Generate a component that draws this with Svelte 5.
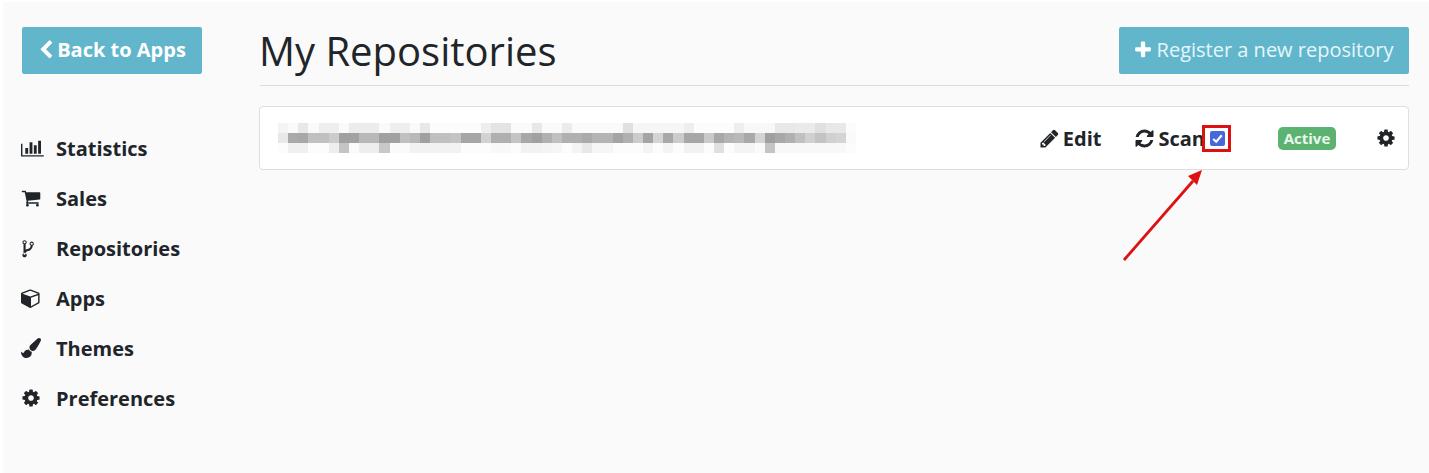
<script>
  // Font Awesome 4 glyphs, [path, viewBox width]
  const icons = {
    back: 'M1427 301l-531 531 531 531q19 19 19 45t-19 45l-166 166q-19 19-45 19t-45-19l-742-742q-19-19-19-45t19-45l742-742q19-19 45-19t45 19l166 166q19 19 19 45t-19 45z',
    plus: 'M1600 736v192q0 40-28 68t-68 28h-416v416q0 40-28 68t-68 28h-192q-40 0-68-28t-28-68v-416h-416q-40 0-68-28t-28-68v-192q0-40 28-68t68-28h416v-416q0-40 28-68t68-28h192q40 0 68 28t28 68v416h416q40 0 68 28t28 68z',
    chart: 'M640 896v512h-256v-512h256zm384-512v1024h-256v-1024h256zm1024 1152v128h-2048v-1152h128v1024h1920zm-640-896v768h-256v-768h256zm384-384v1152h-256v-1152h256z',
    cart: 'M704 1536q0 52-38 90t-90 38-90-38-38-90 38-90 90-38 90 38 38 90zm896 0q0 52-38 90t-90 38-90-38-38-90 38-90 90-38 90 38 38 90zm128-1088v512q0 24-16.5 42.5t-40.5 21.5l-1044 122q13 60 13 70 0 16-24 64h920q26 0 45 19t19 45-19 45-45 19h-1024q-26 0-45-19t-19-45q0-11 8-31.5t16-36 21.5-40 15.5-29.5l-177-823h-204q-26 0-45-19t-19-45 19-45 45-19h256q16 0 28.5 6.5t19.5 15.5 13 24.5 8 26 5.5 29.5 4.5 26h1201q26 0 45 19t19 45z',
    fork: 'M416 1408q0-40-28-68t-68-28-68 28-28 68 28 68 68 28 68-28 28-68zm0-1024q0-40-28-68t-68-28-68 28-28 68 28 68 68 28 68-28 28-68zm640 128q0-40-28-68t-68-28-68 28-28 68 28 68 68 28 68-28 28-68zm96 0q0 52-26 96.5t-70 69.5q-2 287-226 414-67 38-203 81-128 40-169.5 71t-41.5 100v26q44 25 70 69.5t26 96.5q0 80-56 136t-136 56-136-56-56-136q0-52 26-96.5t70-69.5v-820q-44-25-70-69.5t-26-96.5q0-80 56-136t136-56 136 56 56 136q0 52-26 96.5t-70 69.5v497q54-26 154-57 55-17 87.5-29.5t70.5-31 59-39.5 40.5-51 28-69.5 8.5-91.5q-44-25-70-69.5t-26-96.5q0-80 56-136t136-56 136 56 56 136z',
    cube: 'M896 1629l640-349v-636l-640 233v752zm-64-865l698-254-698-254-698 254zm832-252v768q0 35-18 65t-49 47l-704 384q-28 16-61 16t-61-16l-704-384q-31-17-49-47t-18-65v-768q0-40 23-73t61-47l704-256q22-8 44-8t44 8l704 256q38 14 61 47t23 73z',
    brush: 'M1615 0q70 0 122.5 46.5t52.5 116.5q0 63-45 151-332 629-465 752-97 91-218 91-126 0-216.5-92.5t-90.5-219.5q0-128 92-212l638-579q59-54 130-54zm-909 1034q39 76 106.5 130t150.5 76l1 71q4 213-129.5 347t-348.5 134q-123 0-218-46.5t-152.5-127.5-86.5-183-29-220q7 5 41 30t62 44.5 59 36.5 46 17q41 0 55-37 25-66 57.5-112.5t69.5-76 88-47.5 103-25.5 125-10.5z',
    cog: 'M1152 896q0-106-75-181t-181-75-181 75-75 181 75 181 181 75 181-75 75-181zm512-109v222q0 12-8 23t-20 13l-185 28q-19 54-39 91 35 50 107 138 10 12 10 25t-9 23q-27 37-99 108t-94 71q-12 0-26-9l-138-108q-44 23-91 38-16 136-29 186-7 28-36 28h-222q-14 0-24.5-8.5t-11.5-21.5l-28-184q-49-16-90-37l-141 107q-10 9-25 9-14 0-25-11-126-114-165-168-7-10-7-23 0-12 8-23 15-21 51-66.5t54-70.5q-27-50-41-99l-183-27q-13-2-21-12.5t-8-23.5v-222q0-12 8-23t19-13l186-28q14-46 39-92-40-57-107-138-10-12-10-24 0-10 9-23 26-36 98.5-107.5t94.5-71.5q13 0 26 10l138 107q44-23 91-38 16-136 29-186 7-28 36-28h222q14 0 24.5 8.5t11.5 21.5l28 184q49 16 90 37l142-107q9-9 24-9 13 0 25 10 129 119 165 170 7 8 7 22 0 12-8 23-15 21-51 66.5t-54 70.5q26 50 41 98l183 28q13 2 21 12.5t8 23.5z',
    pencil: 'M491 1536l91-91-235-235-91 91v107h128v128h107zm523-928q0-22-22-22-10 0-17 7l-542 542q-7 7-7 17 0 22 22 22 10 0 17-7l542-542q7-7 7-17zm-54-192l416 416-832 832h-416v-416zm683 96q0 53-37 90l-166 166-416-416 166-165q36-38 90-38 53 0 91 38l235 234q37 39 37 91z',
    refresh: 'M1639 1056q0 5-1 7-64 268-268 434.5t-478 166.5q-146 0-282.5-55t-243.5-157l-129 129q-19 19-45 19t-45-19-19-45v-448q0-26 19-45t45-19h448q26 0 45 19t19 45-19 45l-137 137q71 66 161 102t187 36q134 0 250-65t186-179q11-17 53-117 8-23 30-23h192q13 0 22.5 9.5t9.5 22.5zm25-800v448q0 26-19 45t-45 19h-448q-26 0-45-19t-19-45 19-45l138-138q-148-137-349-137-134 0-250 65t-186 179q-11 17-53 117-8 23-30 23h-199q-13 0-22.5-9.5t-9.5-22.5v-7q65-268 270-434.5t480-166.5q146 0 284 55.5t245 156.5l130-129q19-19 45-19t45 19 19 45z'
  }

  const nav = [
    { label: 'Statistics', icon: 'chart', vb: 2048 },
    { label: 'Sales', icon: 'cart', vb: 1792 },
    { label: 'Repositories', icon: 'fork', vb: 1792 },
    { label: 'Apps', icon: 'cube', vb: 1792 },
    { label: 'Themes', icon: 'brush', vb: 1792 },
    { label: 'Preferences', icon: 'cog', vb: 1792 }
  ]

  // greys of the pixelated repository name, one row per mosaic line
  const blurRows = [
    [0xf4,0xfa,0xe8,0xfa,0xee,0xee,0xfa,0xec,0xec,0xec,0xfa,0xee,0xee,0xfa,0xe8,0xfc,0xfc,0xfc,0xfc,0xfc,0xee,0xe4,0xe4,0xfa,0xfa,0xe8,0xfa,0xfa,0xec,0xfa,0xfa,0xfa,0xfa,0xfa,0xe0,0xf6,0xf6,0xf6,0xf6,0xf6,0xee,0xfc,0xfc,0xfc,0xfc,0xee,0xf8,0xf8,0xf8,0xe8,0xe8,0xea,0xea,0xe0,0xe8,0xe8,0xfc],
    [0xe8,0xaa,0xa8,0xc0,0xc0,0xcc,0xa1,0xa2,0xb8,0xb8,0xa1,0xa1,0xc0,0xb9,0xa0,0xc0,0xc0,0xc4,0xa6,0xa6,0xd2,0xb0,0xb0,0xc4,0xa8,0xa1,0xb0,0xc0,0xb0,0xb0,0xaa,0xb4,0xb4,0xa4,0xb0,0xcc,0xa4,0xd4,0xa8,0xcc,0xa7,0xa7,0xca,0xa8,0xb4,0xb8,0xa9,0xd3,0xa0,0xa8,0xb0,0xc0,0xd0,0xc3,0xd0,0xd4,0xfa],
    [0xfc,0xf0,0xf0,0xfc,0xfc,0xee,0xc4,0xfa,0xee,0xee,0xc8,0xfa,0xfa,0xf2,0xf2,0xf2,0xf2,0xf2,0xfc,0xfc,0xfc,0xf8,0xf8,0xfc,0xf2,0xf2,0xf4,0xf6,0xfc,0xf4,0xe8,0xf6,0xf6,0xfc,0xfc,0xfc,0xf4,0xfc,0xf4,0xfc,0xf2,0xf2,0xfc,0xe0,0xfc,0xf4,0xf4,0xfa,0xc4,0xf8,0xf8,0xf8,0xf8,0xf8,0xf8,0xf8,0xfc]
  ]
</script>

{#snippet icon(name, cls, vb = 1792)}
  <svg class={cls} viewBox={`0 0 ${vb} 1792`} aria-hidden="true"><path d={icons[name]} fill="currentColor" /></svg>
{/snippet}

<div class="page">
  <aside class="sidebar">
    <button type="button" class="btn back">{@render icon('back', 'ic-back')}Back to Apps</button>
    <nav>
      {#each nav as item (item.label)}
        <a href="#top" class="nav-item">
          <span class="nav-icon">{@render icon(item.icon, 'ic-nav', item.vb)}</span>
          {item.label}
        </a>
      {/each}
    </nav>
  </aside>

  <main>
    <header>
      <h1>My Repositories</h1>
      <button type="button" class="btn register">{@render icon('plus', 'ic-plus')}Register a new repository</button>
    </header>

    <div class="card">
      <div class="name" role="img" aria-label="Blurred repository name">
        {#each blurRows as row}
          <div class="blur-row">
            {#each row as g}
              <span style={`background: rgb(${g}, ${g}, ${g})`}></span>
            {/each}
          </div>
        {/each}
      </div>
      <div class="actions">
        <a href="#top" class="action edit">{@render icon('pencil', 'ic-action')}Edit</a>
        <a href="#top" class="action scan">{@render icon('refresh', 'ic-action')}Scan</a>
        <span class="marker">
          <span class="checkbox">
            <svg viewBox="0 0 14 14" aria-hidden="true"><path d="M3 7.4 5.8 10 11 4" fill="none" stroke="#fff" stroke-width="2" /></svg>
          </span>
        </span>
        <span class="badge">Active</span>
        <a href="#top" class="gear">{@render icon('cog', 'ic-gear')}</a>
      </div>
    </div>
  </main>

  <!-- annotation over the screenshot -->
  <svg class="arrow" width="90" height="100" viewBox="0 0 90 100" aria-hidden="true">
    <path d="M1 93 70 14" stroke="#dd1111" stroke-width="2.8" fill="none" />
    <path d="M79 3 74 18 65 9z" fill="#dd1111" />
  </svg>
</div>

<style>
  :global(body) {
    margin: 0;
    background: #fff;
    font-family: 'Open Sans', sans-serif;
    color: #212529;
  }
  .page {
    position: relative;
    box-sizing: border-box;
    display: flex;
    height: 471px;
    margin: 2px 0 0 3px;
    padding: 25px 20px 0 19px;
    background: #fafafa;
    overflow: hidden;
  }
  .sidebar {
    width: 180px;
    margin-right: 58px;
    flex: none;
  }
  .btn {
    display: flex;
    align-items: center;
    justify-content: center;
    height: 47px;
    border: none;
    border-radius: 2px;
    background: #62b6cb;
    color: #fff;
    font-family: inherit;
  }
  .back {
    width: 180px;
    padding: 0 0 2px;
    font-size: 20px;
    font-weight: 700;
  }
  .ic-back {
    width: 20px;
    height: 20px;
    margin: 0 1px 0 -2px;
  }
  nav {
    margin-top: 49px;
    display: flex;
    flex-direction: column;
  }
  .nav-item {
    display: flex;
    align-items: center;
    height: 50px;
    color: #212529;
    font-size: 20px;
    font-weight: 700;
    text-decoration: none;
  }
  .nav-icon {
    width: 35px;
    display: flex;
    align-items: center;
    margin-left: -1px;
  }
  .ic-nav {
    height: 20px;
    width: auto;
  }
  main {
    flex: 1;
    min-width: 0;
  }
  header {
    display: flex;
    align-items: flex-start;
    justify-content: space-between;
    height: 58px;
    border-bottom: 1px solid #dcdcdc;
  }
  h1 {
    margin: 0;
    font-size: 40px;
    font-weight: 400;
    line-height: 47px;
    margin-left: -1px;
  }
  .register {
    width: 290px;
    padding: 0 0 2px;
    font-size: 20px;
    font-weight: 400;
    color: #e6f6fa;
  }
  .ic-plus {
    width: 20px;
    height: 20px;
    margin: 0 4px 0 -2px;
    color: #fff;
  }
  .card {
    box-sizing: border-box;
    display: flex;
    align-items: center;
    justify-content: space-between;
    height: 64px;
    margin: 20px 0 0 -1px;
    padding: 0 12px 0 18px;
    background: #fff;
    border: 1px solid #dedede;
    border-radius: 4px;
  }
  .name {
    display: flex;
    flex-direction: column;
  }
  .blur-row {
    display: flex;
    height: 10px;
  }
  .blur-row span {
    width: 10.15px;
  }
  .actions {
    display: flex;
    align-items: center;
    height: 100%;
  }
  .action {
    display: flex;
    align-items: center;
    color: #212529;
    font-size: 20px;
    font-weight: 700;
    text-decoration: none;
  }
  .ic-action {
    width: 21px;
    height: 21px;
    margin-right: 3px;
  }
  .edit {
    margin-right: 33px;
  }
  .marker {
    display: flex;
    box-sizing: border-box;
    padding: 3px 3px 3px 5px;
    margin-left: -3px;
    border: 3px solid #dd1111;
  }
  .checkbox {
    display: flex;
    width: 15px;
    height: 15px;
    background: #4768dc;
    border-radius: 2px;
  }
  .checkbox svg {
    width: 15px;
    height: 15px;
  }
  .badge {
    margin-left: 47px;
    display: flex;
    align-items: center;
    justify-content: center;
    width: 58px;
    height: 23px;
    border-radius: 5px;
    background: #5cb270;
    color: #e8f8ec;
    font-size: 15px;
    font-weight: 700;
  }
  .gear {
    display: flex;
    margin-left: 40px;
    color: #212529;
  }
  .ic-gear {
    width: 20px;
    height: 20px;
  }
  .arrow {
    position: absolute;
    left: 1120px;
    top: 165px;
  }
</style>
